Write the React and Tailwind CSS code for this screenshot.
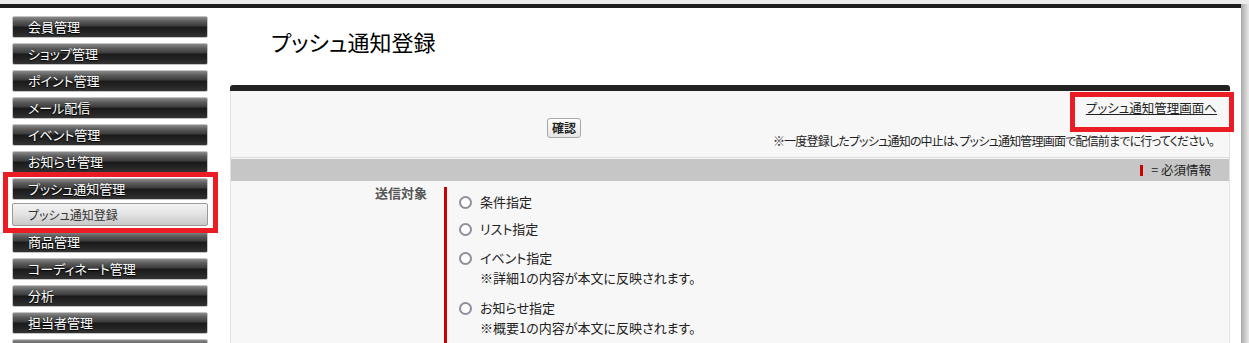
import React from "react";

const menu = [
  "会員管理",
  "ショップ管理",
  "ポイント管理",
  "メール配信",
  "イベント管理",
  "お知らせ管理",
  "プッシュ通知管理",
];
const menu2 = ["商品管理", "コーディネート管理", "分析", "担当者管理", ""];

function DarkBtn({ label }) {
  return (
    <div className="h-[22px] w-[196px] shrink-0 rounded-[2px] border border-[#c4c4c4] bg-[linear-gradient(to_bottom,#8a8a8a_0%,#5a5a5a_22%,#3c3c3c_45%,#1a1a1a_50%,#242424_75%,#333333_100%)] pl-[15px] text-[13px] leading-[20px] text-white [text-shadow:0_1px_1px_#000]">
      {label}
    </div>
  );
}

function Radio({ label, note, className }) {
  return (
    <div className={className}>
      <div className="flex items-center h-[20px]">
        <span className="box-border h-[13px] w-[13px] rounded-full border-2 border-[#8e8e9c] bg-white" />
        <span className="ml-[8px] text-[13px] leading-[20px] text-[#222]">{label}</span>
      </div>
      {note && (
        <div className="pl-[21px] text-[13px] leading-[20px] text-[#222]">{note}</div>
      )}
    </div>
  );
}

export default function App() {
  return (
    <div
      className="relative h-[343px] w-[1249px] overflow-hidden bg-white [font-feature-settings:'palt']"
      style={{ fontFamily: "'Noto Sans CJK JP', 'Noto Sans', sans-serif" }}
    >
      <div className="h-[4px] bg-[#ececec]" />
      <div className="flex">
        <div className="w-[1241px]">
          <div className="h-[4px] bg-[#1e1e1e]" />
          <div className="flex">
            {/* sidebar */}
            <div className="flex w-[218px] shrink-0 flex-col pl-[12px] pt-[8px]">
              <div className="flex flex-col gap-[5px]">
                {menu.map((m) => (
                  <DarkBtn key={m} label={m} />
                ))}
              </div>
              <div className="mt-[3px] h-[23px] w-[196px] rounded-[2px] border border-[#9a9a9a] bg-[linear-gradient(to_bottom,#f4f4f4_0%,#e2e2e2_50%,#c9c9c9_100%)] pl-[15px] text-[12px] leading-[21px] text-[#333]">
                プッシュ通知登録
              </div>
              <div className="mt-[5px] flex flex-col gap-[5px]">
                {menu2.map((m, i) => (
                  <DarkBtn key={i} label={m} />
                ))}
              </div>
            </div>

            {/* main */}
            <div className="flex-1">
              <h1 className="pl-[53px] pt-[18px] text-[22px] font-normal leading-[30px] text-black">
                プッシュ通知登録
              </h1>
              <div className="ml-[12px] mt-[29px] w-[1000px]">
                <div className="h-[6px] rounded-t-[3px] bg-[#222]" />
                <div className="border-x border-[#e2e2e2] bg-[#f7f7f7]">
                  <div className="flex h-[66px] justify-between">
                    <div className="pl-[316px] pt-[23px]">
                      <button className="h-[20px] rounded-[3px] border border-[#a8a8a8] bg-[linear-gradient(to_bottom,#fdfdfd,#e6e6e6)] px-[4px] text-[12px] font-bold leading-[18px] text-[#222]">
                        確認
                      </button>
                    </div>
                    <div className="flex flex-col items-end pr-[12px] pt-[8px]">
                      <a className="text-[12.5px] leading-[18px] text-[#222] underline">
                        プッシュ通知管理画面へ
                      </a>
                      <div className="mt-[15px] pr-[3px] text-[12px] tracking-[-0.8px] leading-[18px] text-[#222]">
                        ※一度登録したプッシュ通知の中止は、プッシュ通知管理画面で配信前までに行ってください。
                      </div>
                    </div>
                  </div>
                  <div className="h-[1px] bg-[#dcdcdc]" />
                  <div className="h-[1px] bg-[#f7f7f7]" />
                  <div className="flex h-[22px] items-center justify-end bg-[#c6c6c6] pr-[18px]">
                    <span className="h-[11px] w-[3px] bg-[#cc0000]" />
                    <span className="ml-[8px] text-[12.5px] text-[#222]">= 必須情報</span>
                  </div>
                  <div className="flex h-[200px]">
                    <div className="w-[213px] shrink-0 pr-[17px] pt-[2px] text-right text-[13px] font-bold leading-[20px] text-[#555]">
                      送信対象
                    </div>
                    <div className="mt-[6px] flex-1 border-l-[3px] border-[#cc0000] pl-[12px] pt-[5px]">
                      <Radio label="条件指定" />
                      <Radio label="リスト指定" className="mt-[7px]" />
                      <Radio
                        label="イベント指定"
                        note="※詳細1の内容が本文に反映されます。"
                        className="mt-[9px]"
                      />
                      <Radio
                        label="お知らせ指定"
                        note="※概要1の内容が本文に反映されます。"
                        className="mt-[10px]"
                      />
                    </div>
                  </div>
                </div>
              </div>
            </div>
          </div>
        </div>
        <div className="h-[400px] w-[8px] bg-[linear-gradient(to_right,#a8a8a8,#d0d0d0_60%,#e8e8e8)]" />
      </div>

      {/* annotation boxes */}
      <div className="pointer-events-none absolute left-[3px] top-[172px] h-[61px] w-[215px] border-[5px] border-[#ec1c24]" />
      <div className="pointer-events-none absolute left-[1070px] top-[92px] h-[40px] w-[164px] border-[5px] border-[#ec1c24]" />
    </div>
  );
}
